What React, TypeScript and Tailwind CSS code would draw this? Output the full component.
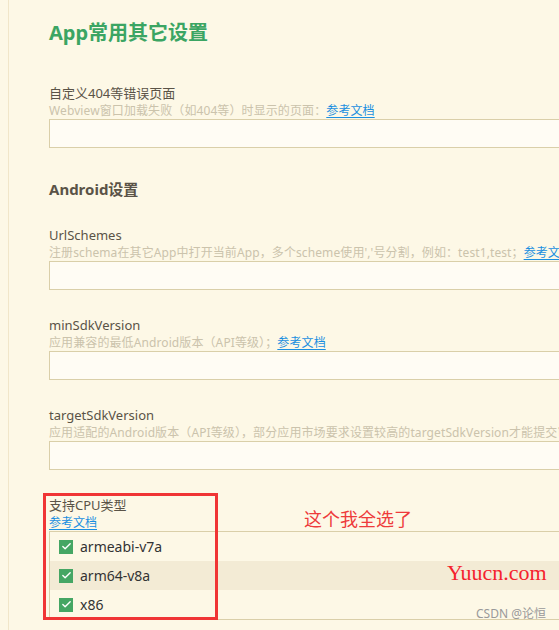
import { Check } from "lucide-react";

const fields = [
  {
    label: "UrlSchemes",
    desc: "注册schema在其它App中打开当前App，多个scheme使用','号分割，例如：test1,test；",
    link: true,
  },
  {
    label: "minSdkVersion",
    desc: "应用兼容的最低Android版本（API等级）；",
    link: true,
  },
  {
    label: "targetSdkVersion",
    desc: "应用适配的Android版本（API等级），部分应用市场要求设置较高的targetSdkVersion才能提交审核；",
    link: true,
  },
];

const cpus = ["armeabi-v7a", "arm64-v8a", "x86"];

const DocLink = () => (
  <a className="text-[#1a8fe0] underline underline-offset-2 cursor-pointer">参考文档</a>
);

const Field = ({ label, desc, link }: { label: string; desc: string; link?: boolean }) => (
  <div className="mt-[27px]">
    <div className="text-[13px] leading-[17px] text-[#5a5347]">{label}</div>
    <div className="text-[12px] leading-[17px] tracking-[0.1px] text-[#cbc3ac] whitespace-nowrap">
      {desc}
      {link && <DocLink />}
    </div>
    <div className="h-[29px] w-[640px] border border-[#dacfa9] bg-[#fffcf4]" />
  </div>
);

export default function App() {
  return (
    <div
      className="relative h-[630px] w-[559px] overflow-hidden bg-[#fdf8e6] pl-[8px]"
      style={{ fontFamily: '"Noto Sans", "Noto Sans CJK SC", sans-serif' }}
    >
      <div className="h-full border-l border-[#f1e6c9] pl-[40px]">
        <h1 className="pt-[19px] text-[20px] leading-[28px] font-bold text-[#3ba563]">App常用其它设置</h1>

        <div className="mt-[38px]">
          <div className="text-[13px] leading-[17px] text-[#5a5347]">自定义404等错误页面</div>
          <div className="text-[12px] leading-[17px] tracking-[0.1px] text-[#cbc3ac] whitespace-nowrap">
            Webview窗口加载失败（如404等）时显示的页面：<DocLink />
          </div>
          <div className="h-[29px] w-[640px] border border-[#dacfa9] bg-[#fffcf4]" />
        </div>

        <h2 className="mt-[30px] text-[15px] leading-[22px] font-bold text-[#5a5347]">Android设置</h2>

        {fields.map((f) => (
          <Field key={f.label} {...f} />
        ))}

        <div className="mt-[27px]">
          <div className="text-[13px] leading-[17px] text-[#5a5347]">支持CPU类型</div>
          <div className="text-[12px] leading-[17px]">
            <DocLink />
          </div>
          <div className="w-[640px] border border-[#dacfa9]">
            {cpus.map((c, i) => (
              <div
                key={c}
                className={`flex h-[29px] items-center pl-[9px] ${i === 1 ? "bg-[#f3ebd5]" : ""}`}
              >
                <span className="flex h-[14px] w-[14px] items-center justify-center bg-[#45a664]">
                  <Check size={11} strokeWidth={3} color="#ffffff" />
                </span>
                <span className="ml-[7px] text-[14px] text-[#333333]">{c}</span>
              </div>
            ))}
          </div>
        </div>
      </div>

      <div className="absolute left-[43px] top-[493px] h-[127px] w-[175px] border-[3px] border-[#f03535]" />
      <div
        className="absolute left-[304px] top-[506px] text-[18px] leading-[24px] text-[#ee3b3b]"
        style={{ fontFamily: '"Noto Sans CJK SC", sans-serif' }}
      >
        这个我全选了
      </div>
      <div
        className="absolute left-[447px] top-[561px] text-[22px] leading-[24px] text-[#f5222d]"
        style={{ fontFamily: '"Liberation Serif", serif' }}
      >
        Yuucn.com
      </div>
      <div className="absolute left-[476px] top-[606px] text-[12px] leading-[16px] text-[#999999]">
        CSDN @论恒
      </div>
    </div>
  );
}
